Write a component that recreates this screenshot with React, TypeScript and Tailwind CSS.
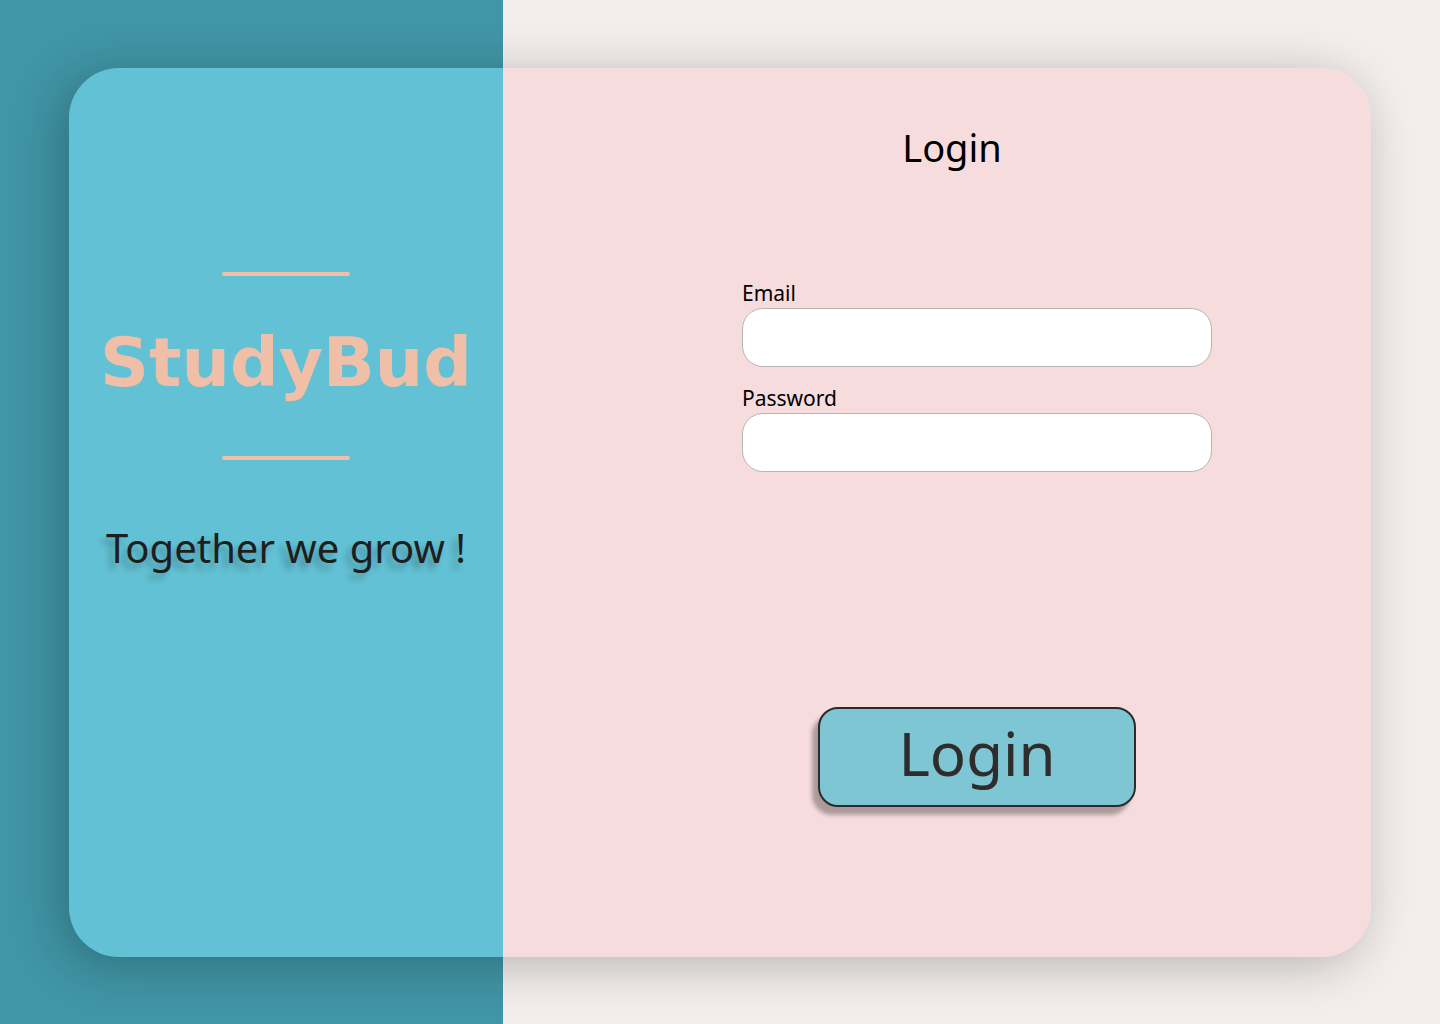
import React from "react";

function Rule() {
  return <div className="h-1 w-32 rounded-full bg-[#f0bfa8]" />;
}

function BrandPanel() {
  return (
    <section className="flex flex-1 basis-0 flex-col items-center bg-[#62c1d4] pt-[204px]">
      <Rule />
      <h1 className="mt-[41px] font-['DejaVu_Sans',sans-serif] text-[68px] leading-[92px] font-bold text-[#f0bfa8]">
        StudyBud
      </h1>
      <div className="mt-[47px]">
        <Rule />
      </div>
      <p className="mt-[61px] text-[40px] leading-[54px] whitespace-nowrap text-[#1e1e1e] [text-shadow:-5px_6px_6px_rgba(0,0,0,0.25)]">
        Together we grow !
      </p>
    </section>
  );
}

function Field({ id, label, type }: { id: string; label: string; type: string }) {
  return (
    <div className="flex flex-col">
      <label htmlFor={id} className="text-[21px] leading-[30px] text-black">
        {label}
      </label>
      <input
        id={id}
        name={id}
        type={type}
        className="h-[59px] w-full rounded-[21px] border border-[#bab5b5] bg-white px-5 text-[21px] text-black outline-none"
      />
    </div>
  );
}

function LoginPanel() {
  return (
    <section className="flex flex-2 basis-0 flex-col items-center bg-[#f7dcde] pt-[53px] pb-10">
      <h2 className="pl-[30px] text-[38px] leading-[52px] text-black">Login</h2>
      <form
        className="mt-[105px] flex w-full flex-col items-center pl-20"
        onSubmit={(e) => e.preventDefault()}
      >
        <div className="flex w-full max-w-[470px] flex-col gap-4">
          <Field id="email" label="Email" type="email" />
          <Field id="password" label="Password" type="password" />
        </div>
        <button
          type="submit"
          className="mt-[235px] flex h-[100px] w-[318px] items-center justify-center rounded-[20px] border-2 border-[#2d2a2a] bg-[#7fc6d5] pb-2 text-[60px] leading-none text-[#2f2c2c] shadow-[-6px_8px_4px_rgba(0,0,0,0.3)]"
        >
          Login
        </button>
      </form>
    </section>
  );
}

export default function App() {
  return (
    <main className="flex min-h-screen bg-[linear-gradient(90deg,#4095a6_calc((100%_-_138px)/3_+_69px),#f3eeed_calc((100%_-_138px)/3_+_69px))] px-[69px] pt-[68px] pb-[67px] font-['Noto_Sans',sans-serif]">
      <div className="flex flex-1 overflow-hidden rounded-[50px] shadow-[-8px_8px_50px_rgba(0,0,0,0.25)]">
        <BrandPanel />
        <LoginPanel />
      </div>
    </main>
  );
}
